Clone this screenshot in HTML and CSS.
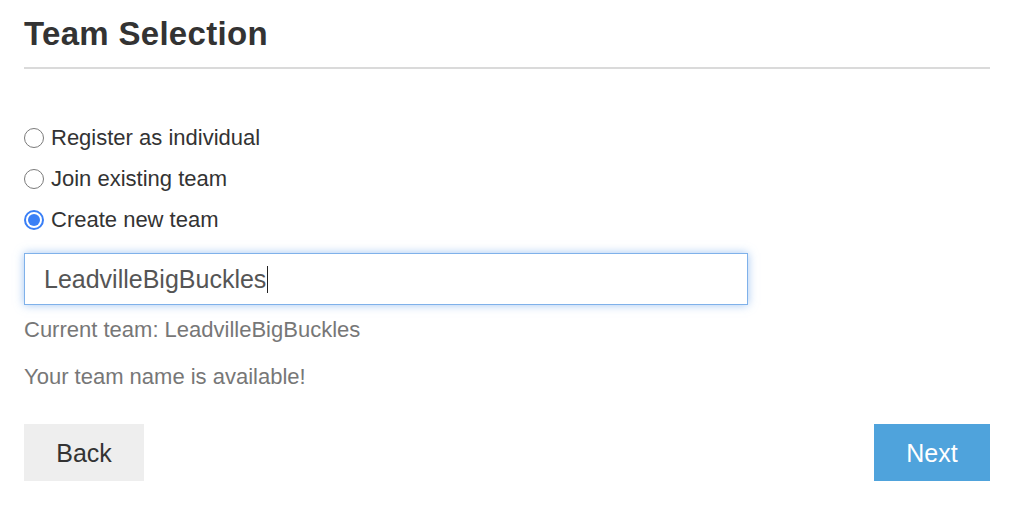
FILE: index.html
```html
<!DOCTYPE html>
<html lang="en">
<head>
<meta charset="utf-8">
<title>Team Selection</title>
<link rel="stylesheet" href="styles.css">
</head>
<body>
<main class="page">
  <header class="header">
    <h1 class="title">Team Selection</h1>
  </header>
  <div class="options">
    <label class="option"><span class="radio"></span><span class="option-text">Register as individual</span></label>
    <label class="option"><span class="radio"></span><span class="option-text">Join existing team</span></label>
    <label class="option"><span class="radio checked"></span><span class="option-text">Create new team</span></label>
  </div>
  <div class="field"><span class="field-text">LeadvilleBigBuckles</span><span class="caret"></span></div>
  <p class="note note-current">Current team: LeadvilleBigBuckles</p>
  <p class="note note-status">Your team name is available!</p>
  <div class="actions">
    <button class="btn btn-back" type="button">Back</button>
    <button class="btn btn-next" type="button">Next</button>
  </div>
</main>
</body>
</html>
```
FILE: styles.css
```css
* { box-sizing: border-box; }
html, body { margin: 0; padding: 0; background: #fff; }
body {
  font-family: "Liberation Sans", Arial, Helvetica, sans-serif;
  color: #333;
}
.page {
  width: 966px;
  margin-left: 24px;
  padding-top: 14px;
  display: flex;
  flex-direction: column;
}
.header {
  border-bottom: 2px solid #dadada;
  padding-bottom: 13px;
}
.title {
  margin: 0;
  font-size: 33px;
  line-height: 40px;
  font-weight: bold;
  color: #333;
  letter-spacing: 0.3px;
}
.options {
  margin-top: 48px;
  display: flex;
  flex-direction: column;
}
.option {
  height: 41px;
  display: flex;
  align-items: center;
  gap: 7px;
  font-size: 22px;
  color: #333;
}
.radio {
  width: 20px;
  height: 20px;
  border-radius: 50%;
  border: 1.5px solid #7a7a7a;
  background: #fff;
  flex: none;
  position: relative;
}
.radio.checked {
  border: 2px solid #3a7ff6;
}
.radio.checked::after {
  content: "";
  position: absolute;
  left: 2px;
  top: 2px;
  width: 12px;
  height: 12px;
  border-radius: 50%;
  background: #3a7ff6;
}
.field {
  margin-top: 13px;
  width: 724px;
  height: 52px;
  border: 1px solid #7fb1ea;
  box-shadow: 0 0 9px rgba(102, 160, 233, 0.6);
  padding-left: 19px;
  display: flex;
  align-items: center;
  font-size: 25px;
  color: #555;
}
.caret {
  display: inline-block;
  width: 1px;
  height: 27px;
  background: #222;
  margin-left: 1px;
}
.note {
  margin: 0;
  font-size: 22px;
  line-height: 26px;
  color: #777;
}
.note-current { margin-top: 12px; }
.note-status { margin-top: 21px; }
.actions {
  margin-top: 34px;
  display: flex;
  justify-content: space-between;
}
.btn {
  height: 57px;
  border: none;
  font-family: inherit;
  font-size: 25px;
  padding: 2px 0 0;
  cursor: pointer;
}
.btn-back {
  width: 120px;
  background: #eeeeee;
  color: #333;
}
.btn-next {
  width: 116px;
  background: #4fa3dc;
  color: #fff;
}
```
